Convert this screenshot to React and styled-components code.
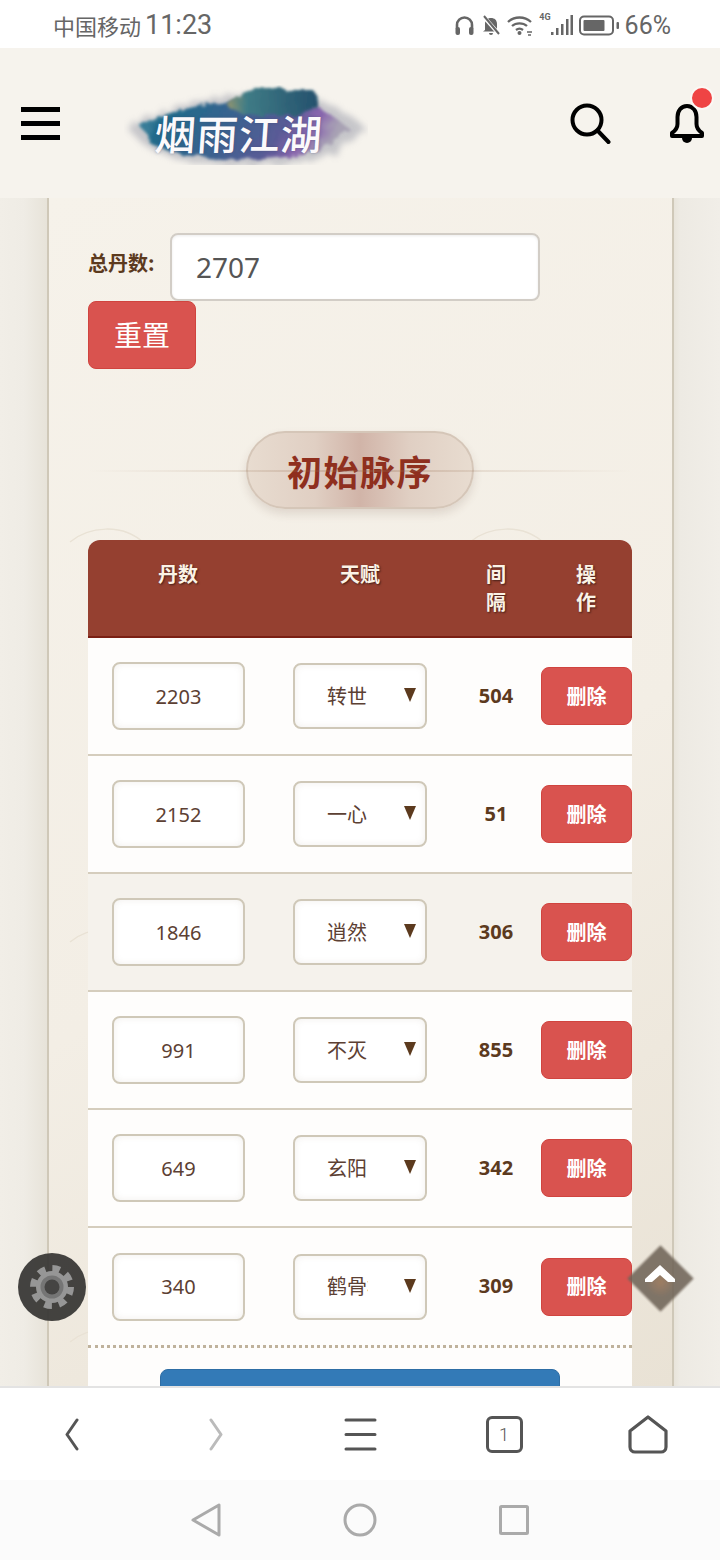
import styled, { createGlobalStyle } from 'styled-components';

const GlobalStyle = createGlobalStyle`
  html, body {
    margin: 0;
    padding: 0;
    background: #fff;
    font-family: "Noto Sans", "Noto Sans CJK SC", sans-serif;
  }
  * {
    box-sizing: border-box;
  }
`;

const CLOUDS = encodeURIComponent(
  `<svg xmlns="http://www.w3.org/2000/svg" width="400" height="400"><g fill="none" stroke="#e9e2d5" stroke-width="1.5"><path d="M21 344c18-15 52-20 75 2"/><path d="M116 352c12-4 24-5 36-8"/></g></svg>`
);

const Screen = styled.div`
  display: flex;
  flex-direction: column;
  width: 720px;
  height: 1560px;
  overflow: hidden;
`;

const StatusBar = styled.div`
  display: flex;
  align-items: center;
  justify-content: space-between;
  height: 48px;
  padding: 2px 49px 0 53px;
  background: #fff;
  color: #666;
  flex: none;
`;

const Carrier = styled.div`
  display: flex;
  align-items: center;
  gap: 4px;
  font-size: 22px;
  font-family: "Noto Sans CJK SC", sans-serif;
`;

const Clock = styled.span`
  font-family: "Roboto", sans-serif;
  font-size: 27px;
`;

const StatusIcons = styled.div`
  display: flex;
  align-items: center;
  gap: 6px;
`;

const NetLabel = styled.span`
  align-self: flex-start;
  margin: 0 -6px 0 0;
  font-size: 9px;
  line-height: 12px;
  font-weight: 700;
  font-family: "Roboto", sans-serif;
`;

const Percent = styled.span`
  font-family: "Roboto", sans-serif;
  font-size: 25px;
`;

const Header = styled.header`
  display: flex;
  align-items: center;
  height: 150px;
  padding-left: 21px;
  background: #f6f3ed;
  flex: none;
`;

const Burger = styled.div`
  display: flex;
  flex-direction: column;
  gap: 9px;
  width: 39px;
  margin-right: 64px;
  span {
    display: block;
    height: 5px;
    background: #000;
  }
`;

const Logo = styled.div`
  display: grid;
  place-items: center;
  width: 244px;
  height: 80px;
  margin-top: 4px;
  > * {
    grid-area: 1 / 1;
  }
`;

const LogoText = styled.span`
  margin: 14px 0 0 -14px;
  color: #fbf9fb;
  font-family: "Noto Sans CJK SC", sans-serif;
  font-size: 41px;
  font-weight: 500;
  line-height: 1;
  letter-spacing: 1px;
  transform: skewX(-4deg);
  text-shadow: 0 0 3px rgba(60, 70, 110, 0.45);
`;

const HeaderActions = styled.div`
  display: flex;
  align-items: center;
  gap: 57px;
  margin-left: auto;
  padding-right: 14px;
`;

const BellWrap = styled.div`
  position: relative;
  width: 38px;
  height: 42px;
`;

const BellDot = styled.span`
  position: absolute;
  top: -16px;
  right: -8px;
  width: 24px;
  height: 24px;
  border-radius: 50%;
  background: #ef4444;
  border: 2px solid #fbf8f4;
`;

const Main = styled.main`
  position: relative;
  flex: none;
  height: 1188px;
  overflow: hidden;
  padding-left: 47px;
  background: linear-gradient(
    90deg,
    #f1eee7 0,
    #efece5 24px,
    #e7e3d9 47px,
    #e7e3d9 673px,
    #edeae3 680px,
    #f1eee8 720px
  );
`;

const Paper = styled.div`
  width: 627px;
  height: 100%;
  padding: 35px 40px 0 39px;
  border-left: 2px solid #cfc8b8;
  border-right: 2px solid #cfc8b8;
  background-color: #f2ede3;
  background-image: url("data:image/svg+xml,${CLOUDS}"),
    linear-gradient(150deg, #f6f2ea 0%, #f3eee5 55%, #e9e2d5 100%);
  background-size: 400px 400px, 100% 100%;
`;

const TotalRow = styled.div`
  display: flex;
  align-items: center;
`;

const TotalLabel = styled.label`
  width: 82px;
  margin: -10px 0 0;
  color: #5c3a1e;
  font-family: "Noto Sans CJK SC", sans-serif;
  font-size: 20px;
  font-weight: 700;
  white-space: nowrap;
`;

const TotalInput = styled.input`
  width: 370px;
  height: 68px;
  padding: 0 24px;
  border: 2px solid #d2cdc6;
  border-radius: 8px;
  outline: none;
  background: #fff;
  box-shadow: inset 0 1px 3px rgba(0, 0, 0, 0.08);
  color: #555;
  font-family: "Noto Sans", sans-serif;
  font-size: 28px;
`;

const ResetButton = styled.button`
  display: block;
  width: 108px;
  height: 68px;
  padding: 0 0 2px;
  border: 1px solid #d0443f;
  border-radius: 8px;
  background: #d9534f;
  color: #fff;
  font-family: "Noto Sans CJK SC", sans-serif;
  font-size: 28px;
`;

const TitleRow = styled.div`
  position: relative;
  display: flex;
  justify-content: center;
  margin: 62px 0 31px;
  &::after {
    content: '';
    position: absolute;
    left: 0;
    right: 0;
    top: 39px;
    height: 2px;
    background: linear-gradient(
      90deg,
      transparent,
      rgba(150, 110, 80, 0.16) 30%,
      rgba(150, 110, 80, 0.28) 50%,
      rgba(150, 110, 80, 0.16) 70%,
      transparent
    );
  }
`;

const TitlePill = styled.h2`
  display: flex;
  align-items: center;
  justify-content: center;
  width: 228px;
  height: 78px;
  margin: 0;
  border: 2px solid #d5c6b8;
  border-radius: 40px;
  background: linear-gradient(90deg, #e8dcd0 0%, #e0cfc3 30%, #d1b4a8 50%, #e0cfc3 72%, #e8dcd0 100%);
  box-shadow: 0 5px 10px rgba(90, 60, 40, 0.14);
  color: #8f2f1e;
  font-family: "Noto Sans CJK SC", sans-serif;
  font-size: 35px;
  font-weight: 700;
  letter-spacing: 1.5px;
`;

const Table = styled.section`
  width: 544px;
  border-radius: 12px 12px 0 0;
  overflow: hidden;
  background: #fefdfc;
`;

const gridColumns = '180px 184px 88px 92px';

const TableHead = styled.div`
  display: grid;
  grid-template-columns: ${gridColumns};
  height: 98px;
  padding-top: 20px;
  border-bottom: 2px solid #7a2014;
  background: #954030;
`;

const HeadCell = styled.div`
  justify-self: center;
  width: ${props => props.$narrow ? '22px' : 'auto'};
  color: #fbf3e6;
  font-family: "Noto Sans CJK SC", sans-serif;
  font-size: 20px;
  font-weight: 700;
  line-height: 28px;
  text-align: center;
  text-shadow: 1px 1px 2px rgba(0, 0, 0, 0.55);
`;

const Row = styled.div`
  display: grid;
  grid-template-columns: ${gridColumns};
  align-items: center;
  height: ${props => props.$last ? '117px' : '118px'};
  border-bottom: ${props => props.$last ? 'none' : '2px solid #d5cdbd'};
  background: ${props => props.$shaded ? '#f5f2ec' : 'transparent'};
`;

const fieldStyles = `
  border: 2px solid #cfc8b8;
  border-radius: 8px;
  outline: none;
  background: #fff;
  box-shadow: inset 0 0 7px rgba(120, 100, 70, 0.1);
  color: #5c4033;
  font-size: 20px;
`;

const DanInput = styled.input`
  ${fieldStyles}
  justify-self: center;
  width: 133px;
  height: 68px;
  margin-left: 1px;
  padding: 0;
  font-family: "Noto Sans", sans-serif;
  text-align: center;
`;

const SelectWrap = styled.div`
  position: relative;
  justify-self: center;
  width: 134px;
  height: 66px;
`;

const TalentSelect = styled.select`
  ${fieldStyles}
  width: 100%;
  height: 100%;
  padding: 0 57px 2px 32px;
  appearance: none;
  font-family: "Noto Sans CJK SC", sans-serif;
`;

const SelectArrow = styled.span`
  position: absolute;
  top: 25px;
  right: 11px;
  width: 0;
  height: 0;
  border-left: 6.5px solid transparent;
  border-right: 6.5px solid transparent;
  border-top: 14px solid #5c3a1e;
  pointer-events: none;
`;

const Gap = styled.div`
  padding-bottom: 2px;
  color: #5c3a1e;
  font-family: "Noto Sans", sans-serif;
  font-size: 20px;
  font-weight: 700;
  text-align: center;
`;

const DeleteButton = styled.button`
  justify-self: end;
  width: 91px;
  height: 58px;
  padding: 0 0 2px;
  border: 1px solid #d0443f;
  border-radius: 8px;
  background: #d9534f;
  color: #fff;
  font-family: "Noto Sans CJK SC", sans-serif;
  font-size: 20px;
  font-weight: 700;
`;

const TableFoot = styled.div`
  display: flex;
  justify-content: center;
  padding-top: 21px;
  border-top: 3px dotted #bfb29c;
`;

const AddButton = styled.button`
  width: 400px;
  height: 68px;
  border: 1px solid #2e6da4;
  border-radius: 8px;
  background: #337ab7;
`;

const GearButton = styled.div`
  position: absolute;
  left: 18px;
  top: 1055px;
  display: grid;
  place-items: center;
  width: 68px;
  height: 68px;
  border-radius: 50%;
  background: rgba(56, 55, 53, 0.94);
  svg {
    filter: blur(0.6px);
  }
`;

const TopButton = styled.div`
  position: absolute;
  left: 627px;
  top: 1047px;
  display: grid;
  place-items: center;
  width: 66px;
  height: 66px;
  > * {
    grid-area: 1 / 1;
  }
`;

const Diamond = styled.span`
  width: 47px;
  height: 47px;
  transform: rotate(45deg);
  background: radial-gradient(circle at 55% 55%, rgba(150, 115, 85, 0.9) 0, rgba(112, 100, 88, 0.88) 40%);
  filter: blur(0.8px);
`;

const Chevron = styled.svg`
  position: relative;
  margin-top: -8px;
`;

const BrowserBar = styled.nav`
  display: grid;
  grid-template-columns: repeat(5, 144px);
  place-items: center;
  height: 94px;
  border-top: 2px solid #e3e3e3;
  background: #fff;
  flex: none;
`;

const TabCount = styled.div`
  display: grid;
  place-items: center;
  width: 37px;
  height: 37px;
  border: 3px solid #555;
  border-radius: 6px;
  color: #555;
  font-family: "Roboto", sans-serif;
  font-size: 18px;
  font-weight: 300;
`;

const SystemBar = styled.nav`
  display: flex;
  align-items: center;
  justify-content: center;
  gap: 122px;
  height: 80px;
  background: #fbfbfb;
  flex: none;
`;

const rows = [
  { dan: '2203', talent: '转世', gap: 504 },
  { dan: '2152', talent: '一心', gap: 51 },
  { dan: '1846', talent: '逍然', gap: 306, shaded: true },
  { dan: '991', talent: '不灭', gap: 855 },
  { dan: '649', talent: '玄阳', gap: 342 },
  { dan: '340', talent: '鹤骨松姿', gap: 309 },
];

const HeadphoneIcon = () => (
  <svg width="21" height="21" viewBox="0 0 21 21" fill="none">
    <path d="M3 14V10a7.5 7.5 0 0 1 15 0v4" stroke="#666" strokeWidth="2.6" />
    <rect x="1.5" y="12" width="4.5" height="8" rx="2" fill="#666" />
    <rect x="15" y="12" width="4.5" height="8" rx="2" fill="#666" />
  </svg>
);

const MuteBellIcon = () => (
  <svg width="20" height="21" viewBox="0 0 20 21" fill="none">
    <path d="M4 15V9c0-4 2.5-6 6-6s6 2 6 6v6l2 1.500H2z" fill="#666" />
    <path d="M8 18h4a2 2 0 0 1-4 0z" fill="#666" />
    <path d="M2 1l16 18" stroke="#fff" strokeWidth="4" />
    <path d="M3 1l15 18" stroke="#666" strokeWidth="2" />
  </svg>
);

const WifiIcon = () => (
  <svg width="26" height="21" viewBox="0 0 26 21" fill="none" stroke="#666" strokeWidth="2.300">
    <path d="M1 7c6.500-6 16.500-6 23 0" />
    <path d="M5 11c4-3.600 11-3.600 15 0" />
    <path d="M9 15c2-1.600 5-1.600 7 0" />
    <circle cx="12.500" cy="18" r="2" fill="#666" stroke="none" />
    <path d="M20 17h5M21 20h3" strokeWidth="1.500" />
  </svg>
);

const SignalIcon = () => (
  <svg width="22" height="21" viewBox="0 0 22 21" fill="#666">
    <rect x="0" y="17" width="2.500" height="3" />
    <rect x="5" y="13" width="2.500" height="7" />
    <rect x="10" y="9" width="2.500" height="11" />
    <rect x="15" y="4" width="2.500" height="16" />
    <rect x="19.500" y="0" width="2.500" height="20" />
  </svg>
);

const BatteryIcon = () => (
  <svg width="40" height="21" viewBox="0 0 40 21" fill="none">
    <rect x="1" y="1.500" width="33" height="18" rx="4" stroke="#666" strokeWidth="2" />
    <rect x="4.500" y="5" width="21" height="11" rx="1" fill="#666" />
    <rect x="37.500" y="7" width="2.500" height="7" rx="1" fill="#666" />
  </svg>
);

const SearchIcon = () => (
  <svg width="41" height="41" viewBox="0 0 41 41" fill="none" stroke="#000" strokeWidth="4" strokeLinecap="round">
    <circle cx="17" cy="17" r="14.500" />
    <path d="M27.500 27.500L38.500 39" />
  </svg>
);

const BellIcon = () => (
  <svg width="38" height="42" viewBox="0 0 38 42" fill="none">
    <path
      d="M19 4c-6 0-9.500 5-9.500 11v7c0 4-2 6.500-5.500 9v3h30v-3c-3.500-2.500-5.500-5-5.500-9v-7C28.500 9 25 4 19 4z"
      stroke="#000"
      strokeWidth="4"
      strokeLinejoin="round"
    />
    <path d="M14 36h10a5 5 0 0 1-10 0z" fill="#000" />
  </svg>
);

const LogoInk = () => (
  <svg width="244" height="80" viewBox="0 0 244 80">
    <defs>
      <linearGradient id="ink" x1="0" x2="1" y1="0" y2="0.2">
        <stop offset="0" stopColor="#6ea3b5" />
        <stop offset="0.18" stopColor="#1f6a8a" />
        <stop offset="0.5" stopColor="#3c6290" />
        <stop offset="0.75" stopColor="#5a5a96" />
        <stop offset="0.88" stopColor="#8a66ae" />
        <stop offset="1" stopColor="#a8a2b4" />
      </linearGradient>
      <linearGradient id="inkTop" x1="0" x2="1" y1="0" y2="0">
        <stop offset="0" stopColor="#8f9470" />
        <stop offset="0.2" stopColor="#3f7c86" />
        <stop offset="1" stopColor="#234f6c" />
      </linearGradient>
      <filter id="wash" x="-10%" y="-20%" width="120%" height="140%">
        <feTurbulence type="fractalNoise" baseFrequency="0.09" numOctaves="3" seed="5" />
        <feDisplacementMap in="SourceGraphic" scale="9" />
        <feGaussianBlur stdDeviation="1.800" />
      </filter>
      <filter id="halo" x="-10%" y="-20%" width="120%" height="140%">
        <feTurbulence type="fractalNoise" baseFrequency="0.12" numOctaves="3" seed="8" />
        <feDisplacementMap in="SourceGraphic" scale="10" />
        <feGaussianBlur stdDeviation="3" />
      </filter>
    </defs>
    <path
      d="M2 42C30 28 60 18 96 12c40-6 90-6 118 12 12 6 20 12 28 20-10 8-22 18-36 26-30 10-70 12-104 10-36-2-68-8-84-22C14 54 8 48 2 42z"
      fill="#a7a9b3"
      opacity="0.6"
      filter="url(#halo)"
    />
    <path
      d="M16 42C36 30 60 22 96 18c40-6 84-6 108 10 8 5 14 10 22 16-10 6-20 14-30 20-30 10-66 12-98 10-32-2-58-6-74-18C28 52 22 48 16 42z"
      fill="url(#ink)"
      filter="url(#wash)"
    />
    <path d="M104 16l14-6 12-6 58 0 6 8 2 12-26 6-50 0-16-8z" fill="url(#inkTop)" filter="url(#wash)" />
  </svg>
);

const GearIcon = () => (
  <svg width="46" height="46" viewBox="0 0 46 46" fill="none">
    <circle cx="23" cy="23" r="18.500" stroke="#969696" strokeWidth="7" strokeDasharray="7.500 7" />
    <circle cx="23" cy="23" r="16" fill="#969696" />
    <circle cx="23" cy="23" r="11.500" fill="#757575" />
    <circle cx="23" cy="23" r="7.500" fill="#454443" />
  </svg>
);

const ChevronIcon = () => (
  <Chevron width="32" height="18" viewBox="0 0 32 18">
    <path d="M16 0l15 14v3H24L16 10 8 17H1v-3z" fill="#fff" />
  </Chevron>
);

const BackIcon = ({ color = '#555', flip }) => (
  <svg width="16" height="33" viewBox="0 0 16 33" fill="none" stroke={color} strokeWidth="3" strokeLinecap="round" strokeLinejoin="round">
    <path d={flip ? 'M3 2l10 14.500L3 31' : 'M13 2L3 16.500 13 31'} />
  </svg>
);

const MenuIcon = () => (
  <svg width="33" height="33" viewBox="0 0 33 33" stroke="#555" strokeWidth="3" strokeLinecap="round">
    <path d="M2 2h29M2 16.500h29M2 31h29" />
  </svg>
);

const HomeIcon = () => (
  <svg width="40" height="39" viewBox="0 0 40 39" fill="none" stroke="#555" strokeWidth="3.200" strokeLinejoin="round">
    <path d="M20 2L38 16v16a5 5 0 0 1-5 5H7a5 5 0 0 1-5-5V16z" />
  </svg>
);

const SysBackIcon = () => (
  <svg width="30" height="34" viewBox="0 0 30 34" fill="none" stroke="#aaa" strokeWidth="3" strokeLinejoin="round">
    <path d="M28 2v30L2 17z" />
  </svg>
);

const SysHomeIcon = () => (
  <svg width="34" height="34" viewBox="0 0 34 34" fill="none" stroke="#aaa" strokeWidth="3">
    <circle cx="17" cy="17" r="15" />
  </svg>
);

const SysTabsIcon = () => (
  <svg width="30" height="30" viewBox="0 0 30 30" fill="none" stroke="#aaa" strokeWidth="3">
    <rect x="1.500" y="1.500" width="27" height="27" rx="1" />
  </svg>
);

const App = () => {
  return (
    <Screen>
      <GlobalStyle />
      <StatusBar>
        <Carrier>
          中国移动
          <Clock>11:23</Clock>
        </Carrier>
        <StatusIcons>
          <HeadphoneIcon />
          <MuteBellIcon />
          <WifiIcon />
          <NetLabel>4G</NetLabel>
          <SignalIcon />
          <BatteryIcon />
          <Percent>66%</Percent>
        </StatusIcons>
      </StatusBar>

      <Header>
        <Burger>
          <span />
          <span />
          <span />
        </Burger>
        <Logo>
          <LogoInk />
          <LogoText>烟雨江湖</LogoText>
        </Logo>
        <HeaderActions>
          <SearchIcon />
          <BellWrap>
            <BellIcon />
            <BellDot />
          </BellWrap>
        </HeaderActions>
      </Header>

      <Main>
        <Paper>
          <TotalRow>
            <TotalLabel>总丹数:</TotalLabel>
            <TotalInput readOnly value="2707" />
          </TotalRow>
          <ResetButton type="button">重置</ResetButton>

          <TitleRow>
            <TitlePill>初始脉序</TitlePill>
          </TitleRow>

          <Table>
            <TableHead>
              <HeadCell>丹数</HeadCell>
              <HeadCell>天赋</HeadCell>
              <HeadCell $narrow>间隔</HeadCell>
              <HeadCell $narrow>操作</HeadCell>
            </TableHead>
            {rows.map((row, i) => (
              <Row key={row.dan} $shaded={row.shaded} $last={i === rows.length - 1}>
                <DanInput readOnly value={row.dan} />
                <SelectWrap>
                  <TalentSelect defaultValue={row.talent}>
                    <option>{row.talent}</option>
                  </TalentSelect>
                  <SelectArrow />
                </SelectWrap>
                <Gap>{row.gap}</Gap>
                <DeleteButton type="button">删除</DeleteButton>
              </Row>
            ))}
            <TableFoot>
              <AddButton type="button" />
            </TableFoot>
          </Table>
        </Paper>

        <GearButton>
          <GearIcon />
        </GearButton>
        <TopButton>
          <Diamond />
          <ChevronIcon />
        </TopButton>
      </Main>

      <BrowserBar>
        <BackIcon />
        <BackIcon color="#bbb" flip />
        <MenuIcon />
        <TabCount>1</TabCount>
        <HomeIcon />
      </BrowserBar>

      <SystemBar>
        <SysBackIcon />
        <SysHomeIcon />
        <SysTabsIcon />
      </SystemBar>
    </Screen>
  );
};

export default App;
